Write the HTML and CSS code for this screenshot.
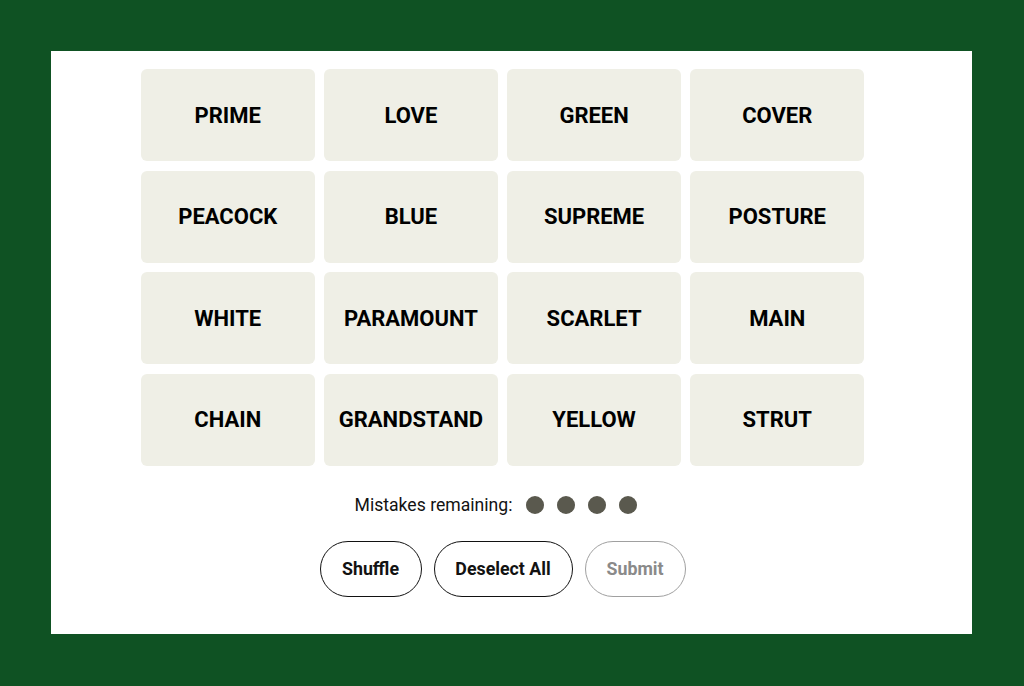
FILE: index.html
```html
<!DOCTYPE html>
<html>
<head>
<meta charset="utf-8">
<link rel="stylesheet" href="styles.css">
</head>
<body>
<div class="panel">
  <div class="game">
    <div class="grid">
      <div class="tile">PRIME</div>
      <div class="tile">LOVE</div>
      <div class="tile">GREEN</div>
      <div class="tile">COVER</div>
      <div class="tile">PEACOCK</div>
      <div class="tile">BLUE</div>
      <div class="tile">SUPREME</div>
      <div class="tile">POSTURE</div>
      <div class="tile">WHITE</div>
      <div class="tile">PARAMOUNT</div>
      <div class="tile">SCARLET</div>
      <div class="tile">MAIN</div>
      <div class="tile">CHAIN</div>
      <div class="tile">GRANDSTAND</div>
      <div class="tile">YELLOW</div>
      <div class="tile">STRUT</div>
    </div>
    <div class="mistakes">
      <span class="label">Mistakes remaining:</span>
      <span class="dots"><span class="dot"></span><span class="dot"></span><span class="dot"></span><span class="dot"></span></span>
    </div>
    <div class="actions">
      <button class="btn btn-shuffle">Shuffle</button>
      <button class="btn btn-deselect">Deselect All</button>
      <button class="btn btn-submit">Submit</button>
    </div>
  </div>
</div>
</body>
</html>
```

FILE: styles.css
```css
html, body {
  margin: 0;
  padding: 0;
  background: #0f5223;
  width: 1024px;
  height: 686px;
  overflow: hidden;
}
body {
  padding: 51px 52px 52px 51px;
  box-sizing: border-box;
  font-family: Roboto, "Liberation Sans", sans-serif;
}
.panel {
  background: #ffffff;
  width: 921px;
  height: 583px;
  box-sizing: border-box;
  padding: 18px 0 0 90px;
}
.game {
  width: 723px;
  display: flex;
  flex-direction: column;
  align-items: center;
}
.grid {
  width: 723px;
  display: grid;
  grid-template-columns: repeat(4, 1fr);
  grid-auto-rows: 92px;
  column-gap: 9.67px;
  row-gap: 9.67px;
}
.tile {
  background: #efefe6;
  border-radius: 6px;
  display: flex;
  align-items: center;
  justify-content: center;
  font-weight: 700;
  font-size: 22px;
  color: #000;
}
.mistakes {
  margin-top: 28px;
  padding-right: 13px;
  display: flex;
  align-items: center;
  height: 22px;
}
.label {
  font-size: 17.6px;
  color: #121212;
  margin-right: 14px;
}
.dots {
  display: flex;
  gap: 13px;
}
.dot {
  width: 18px;
  height: 18px;
  border-radius: 50%;
  background: #5a594e;
}
.actions {
  margin-top: 25px;
  display: flex;
  gap: 12px;
}
.btn {
  height: 56px;
  border-radius: 28px;
  border: 1px solid #121212;
  background: #fff;
  font-family: Roboto, "Liberation Sans", sans-serif;
  font-weight: 700;
  font-size: 17.8px;
  color: #121212;
  padding: 0;
}
.btn-shuffle { width: 102px; }
.btn-deselect { width: 139px; }
.btn-submit {
  width: 101px;
  border-color: #a0a0a0;
  color: #8a8a8a;
}
```
